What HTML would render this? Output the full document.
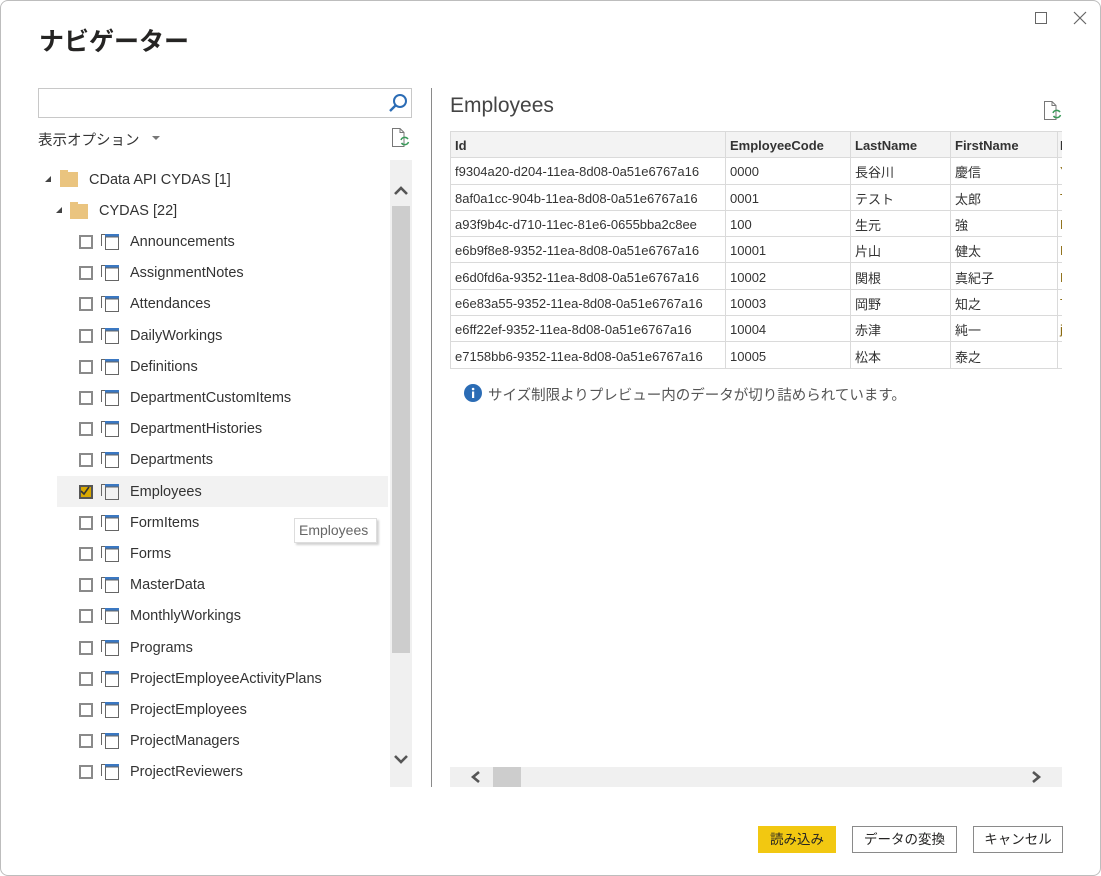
<!DOCTYPE html>
<html><head><meta charset="utf-8"><style>
*{margin:0;padding:0;box-sizing:border-box}
body{width:1101px;height:876px;background:#fff;font-family:"Liberation Sans","Noto Sans CJK JP",sans-serif;color:#333;position:relative;overflow:hidden}
.a{position:absolute}
.win{left:0;top:0;width:1101px;height:876px;border:1px solid #bdbdbd;border-radius:8px}
.title{left:39px;top:22px;font-size:25px;font-weight:bold;color:#252423}
.row{position:absolute;left:57px;width:331px;height:31px}
.cb{position:absolute;left:22px;top:9px;width:14px;height:14px;border:2.5px solid #8a8a8a;background:#fff}
.ic{position:absolute;left:44px;top:7px;width:18px;height:17px}
.lbl{position:absolute;left:73px;top:8px;font-size:14.5px;color:#333}
table{border-collapse:collapse;font-size:13px;table-layout:fixed}
td,th{border:1px solid #dadada;height:26.3px;padding:2px 4px 0;text-align:left;white-space:nowrap;overflow:hidden;color:#333;font-weight:normal}
th{background:#f3f3f3;font-weight:bold;color:#333}
td.l,th.l{padding-left:2px}
.btn{position:absolute;top:826px;height:27px;border:1px solid #8a8a8a;font-size:13.5px;text-align:center;line-height:25px;color:#252423;background:#fff}
</style></head><body>
<div class="a win"></div>
<div class="a title">ナビゲーター</div>
<div class="a" style="left:1035px;top:12px;width:12px;height:12px;border:1px solid #666"></div>
<svg class="a" style="left:1073px;top:11px" width="14" height="14"><path d="M1 1L13 13M13 1L1 13" stroke="#666" stroke-width="1.2"/></svg>

<div class="a" style="left:38px;top:88px;width:374px;height:30px;border:1px solid #c8c8c8"></div>
<svg class="a" style="left:388px;top:93px" width="20" height="20"><circle cx="12" cy="8" r="6" fill="none" stroke="#2b6cb5" stroke-width="2"/><path d="M8 12L2 18" stroke="#2b6cb5" stroke-width="2.4"/></svg>
<div class="a" style="left:38px;top:129px;font-size:14.5px;color:#333">表示オプション</div>
<svg class="a" style="left:151px;top:134px" width="10" height="8"><path d="M1 2L9 2L5 6Z" fill="#777"/></svg>
<svg class="a" style="left:390px;top:127px" width="22" height="22"><path d="M2.5 1.5H10L14 5.5V19.5H2.5Z M10 1.5V5.5H14" fill="none" stroke="#777"/><path d="M11 13a4 4 0 0 1 7-1M18.5 15a4 4 0 0 1-7 1" fill="none" stroke="#3a9a5a" stroke-width="1.5"/></svg>

<svg class="a" style="left:44px;top:175px" width="8" height="8"><path d="M7 1V7H1Z" fill="#444"/></svg>
<div class="a" style="left:60px;top:172px;width:18px;height:15px;background:#eac47f"></div>
<div class="a" style="left:60px;top:170px;width:8px;height:4px;background:#eac47f"></div>
<div class="a" style="left:89px;top:172px;font-size:14.5px">CData API CYDAS [1]</div>
<svg class="a" style="left:55px;top:206px" width="8" height="8"><path d="M7 1V7H1Z" fill="#444"/></svg>
<div class="a" style="left:70px;top:204px;width:18px;height:15px;background:#eac47f"></div>
<div class="a" style="left:70px;top:202px;width:8px;height:4px;background:#eac47f"></div>
<div class="a" style="left:99px;top:203px;font-size:14.5px">CYDAS [22]</div>

<div id="tree"></div>
<script>
var n=["Announcements","AssignmentNotes","Attendances","DailyWorkings","Definitions","DepartmentCustomItems","DepartmentHistories","Departments","Employees","FormItems","Forms","MasterData","MonthlyWorkings","Programs","ProjectEmployeeActivityPlans","ProjectEmployees","ProjectManagers","ProjectReviewers"];
var h="";
n.forEach(function(s,i){var t=226+i*31.2;var sel=s=="Employees";
h+='<div class="row" style="top:'+t+'px;'+(sel?'background:#f2f2f2':'')+'">'+
(sel?'<div class="cb" style="border-color:#555;background:#d8a800"><svg width="10" height="10" style="position:absolute;left:-1px;top:-1px"><path d="M1 5L4 8L9 1" stroke="#333" stroke-width="1.6" fill="none"/></svg></div>':'<div class="cb"></div>')+
'<svg class="ic" viewBox="0 0 18 17"><path d="M0.5 13V1.5H4" fill="none" stroke="#666"/><rect x="4" y="1" width="14" height="3" fill="#3b78c2"/><rect x="4.5" y="4" width="13" height="12.5" fill="none" stroke="#666"/></svg>'+
'<div class="lbl">'+s+'</div></div>';});
document.getElementById("tree").innerHTML=h;
</script>

<div class="a" style="left:294px;top:518px;width:83px;height:25px;border:1px solid #ddd;background:#fff;box-shadow:2px 2px 2px rgba(0,0,0,.18);font-size:14px;color:#666;padding:3px 0 0 4px">Employees</div>

<div class="a" style="left:390px;top:160px;width:22px;height:627px;background:#f0f0f0"></div>
<div class="a" style="left:392px;top:206px;width:18px;height:447px;background:#cdcdcd"></div>
<svg class="a" style="left:393px;top:184px" width="16" height="12"><path d="M2 10L8 4L14 10" fill="none" stroke="#555" stroke-width="2.6"/></svg>
<svg class="a" style="left:393px;top:753px" width="16" height="12"><path d="M2 3L8 9L14 3" fill="none" stroke="#555" stroke-width="2.6"/></svg>

<div class="a" style="left:431px;top:88px;width:1px;height:699px;background:#8a8a8a"></div>

<div class="a" style="left:450px;top:94px;font-size:21px;color:#444">Employees</div>
<svg class="a" style="left:1042px;top:100px" width="22" height="22"><path d="M2.5 1.5H10L14 5.5V19.5H2.5Z M10 1.5V5.5H14" fill="none" stroke="#777"/><path d="M11 13a4 4 0 0 1 7-1M18.5 15a4 4 0 0 1-7 1" fill="none" stroke="#3a9a5a" stroke-width="1.5"/></svg>

<div class="a" style="left:450px;top:131px;width:612px;height:238px;overflow:hidden">
<table style="width:640px">
<colgroup><col style="width:275px"><col style="width:125px"><col style="width:100px"><col style="width:107px"><col style="width:33px"></colgroup>
<tr><th>Id</th><th>EmployeeCode</th><th>LastName</th><th>FirstName</th><th class="l">L</th></tr>
<tr><td>f9304a20-d204-11ea-8d08-0a51e6767a16</td><td>0000</td><td>長谷川</td><td>慶信</td><td class="l" style="color:#8a6a10">Y</td></tr>
<tr><td>8af0a1cc-904b-11ea-8d08-0a51e6767a16</td><td>0001</td><td>テスト</td><td>太郎</td><td class="l" style="color:#8a6a10">T</td></tr>
<tr><td>a93f9b4c-d710-11ec-81e6-0655bba2c8ee</td><td>100</td><td>生元</td><td>強</td><td class="l" style="color:#8a6a10">M</td></tr>
<tr><td>e6b9f8e8-9352-11ea-8d08-0a51e6767a16</td><td>10001</td><td>片山</td><td>健太</td><td class="l" style="color:#8a6a10">K</td></tr>
<tr><td>e6d0fd6a-9352-11ea-8d08-0a51e6767a16</td><td>10002</td><td>関根</td><td>真紀子</td><td class="l" style="color:#8a6a10">M</td></tr>
<tr><td>e6e83a55-9352-11ea-8d08-0a51e6767a16</td><td>10003</td><td>岡野</td><td>知之</td><td class="l" style="color:#8a6a10">T</td></tr>
<tr><td>e6ff22ef-9352-11ea-8d08-0a51e6767a16</td><td>10004</td><td>赤津</td><td>純一</td><td class="l" style="color:#8a6a10">j</td></tr>
<tr><td>e7158bb6-9352-11ea-8d08-0a51e6767a16</td><td>10005</td><td>松本</td><td>泰之</td><td class="l"></td></tr>
</table></div>

<svg class="a" style="left:464px;top:384px" width="18" height="18"><circle cx="9" cy="9" r="9" fill="#2b6cb5"/><rect x="8" y="7.5" width="2.2" height="6.5" fill="#fff"/><circle cx="9.1" cy="5" r="1.3" fill="#fff"/></svg>
<div class="a" style="left:488px;top:384px;font-size:14.5px;color:#555">サイズ制限よりプレビュー内のデータが切り詰められています。</div>

<div class="a" style="left:450px;top:767px;width:612px;height:20px;background:#f0f0f0"></div>
<div class="a" style="left:493px;top:767px;width:28px;height:20px;background:#cdcdcd"></div>
<svg class="a" style="left:470px;top:770px" width="12" height="14"><path d="M9 2L3 7L9 12" fill="none" stroke="#555" stroke-width="2.6"/></svg>
<svg class="a" style="left:1030px;top:770px" width="12" height="14"><path d="M3 2L9 7L3 12" fill="none" stroke="#555" stroke-width="2.6"/></svg>

<div class="btn" style="left:758px;width:78px;background:#f2c811;border-color:#f2c811">読み込み</div>
<div class="btn" style="left:852px;width:105px">データの変換</div>
<div class="btn" style="left:973px;width:90px">キャンセル</div>
</body></html>
